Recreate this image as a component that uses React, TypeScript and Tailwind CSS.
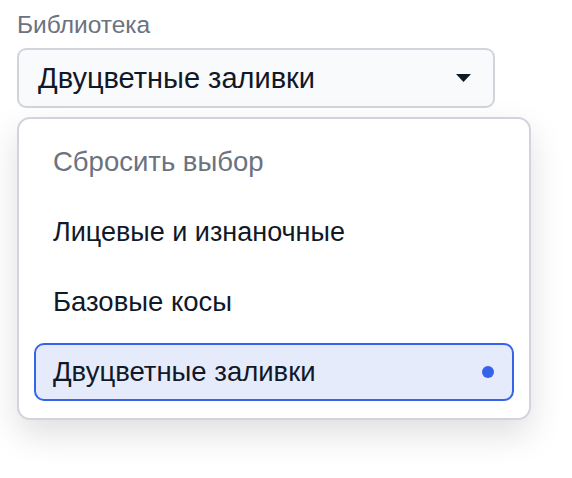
import React from "react";

export default function App() {
  const font = { fontFamily: '"Liberation Sans", Arial, sans-serif' };
  return (
    <div className="min-h-[478px] w-[572px] bg-white" style={font}>
      <div className="pl-[17px] pt-[11px] w-[531px]">
        <div className="h-[28px] text-[24.5px] leading-[28px] text-[#6b7280]">Библиотека</div>
        <div className="mt-[9px] w-[478px] h-[60px] rounded-[9px] border-2 border-[#d1d5db] bg-[#f9fafb] flex items-center justify-between pl-[19px] pr-[22px]">
          <span className="text-[29px] leading-[34px] text-[#111827]">Двуцветные заливки</span>
          <svg width="15" height="8" viewBox="0 0 15 8">
            <path d="M0 0 H15 L7.5 8 Z" fill="#111827" />
          </svg>
        </div>
        <div className="mt-[9px] w-[514px] rounded-[13px] border-2 border-[#d1d5db] bg-white shadow-[0_14px_34px_rgba(0,0,0,0.13)] px-[15px] pt-[14px] pb-[17px] flex flex-col gap-[12px]">
          <div className="h-[58px] flex items-center pl-[19px] text-[27.5px] text-[#6b7280]">Сбросить выбор</div>
          <div className="h-[58px] flex items-center pl-[19px] text-[27px] text-[#111827]">Лицевые и изнаночные</div>
          <div className="h-[58px] flex items-center pl-[19px] text-[27.5px] text-[#111827]">Базовые косы</div>
          <div className="h-[58px] flex items-center justify-between pl-[17px] pr-[18px] text-[27.5px] text-[#111827] bg-[#e5ebfb] border-2 border-[#3563e9] rounded-[10px]">
            <span>Двуцветные заливки</span>
            <span className="w-[12px] h-[12px] rounded-full bg-[#3563e9]" />
          </div>
        </div>
      </div>
    </div>
  );
}
